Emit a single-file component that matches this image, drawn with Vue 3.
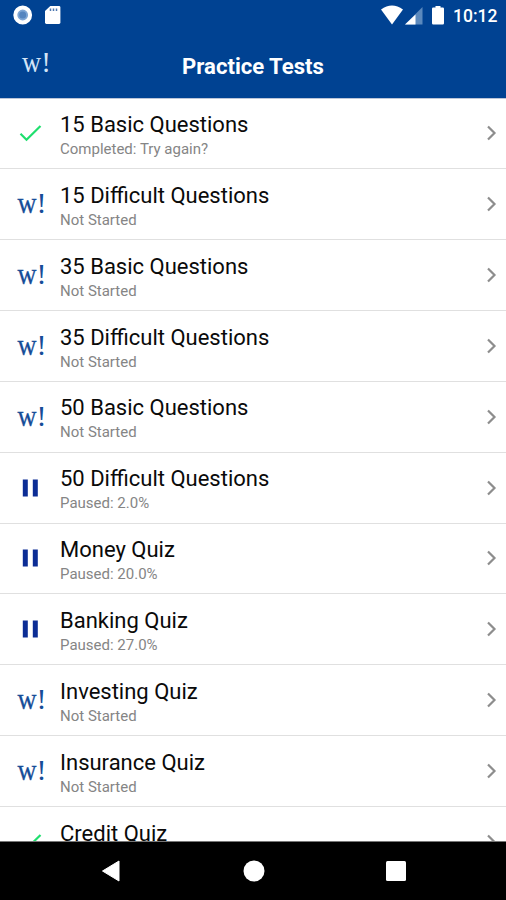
<script setup>
const tests = [
  { title: '15 Basic Questions', note: 'Completed: Try again?', state: 'done' },
  { title: '15 Difficult Questions', note: 'Not Started', state: 'new' },
  { title: '35 Basic Questions', note: 'Not Started', state: 'new' },
  { title: '35 Difficult Questions', note: 'Not Started', state: 'new' },
  { title: '50 Basic Questions', note: 'Not Started', state: 'new' },
  { title: '50 Difficult Questions', note: 'Paused: 2.0%', state: 'paused' },
  { title: 'Money Quiz', note: 'Paused: 20.0%', state: 'paused' },
  { title: 'Banking Quiz', note: 'Paused: 27.0%', state: 'paused' },
  { title: 'Investing Quiz', note: 'Not Started', state: 'new' },
  { title: 'Insurance Quiz', note: 'Not Started', state: 'new' },
  { title: 'Credit Quiz', note: '', state: 'done' },
]
</script>

<template>
  <div class="screen">
    <div class="status">
      <svg class="status-left" width="48" height="20" viewBox="0 0 48 20">
        <circle cx="9.7" cy="10" r="7.4" fill="#7fa6d4" stroke="#fff" stroke-width="4" />
        <circle cx="9.7" cy="10" r="3.5" fill="#5585bf" />
        <path d="M37.3 1h8.7q1.4 0 1.4 1.4v15.2q0 1.4-1.4 1.4H33.4q-1.4 0-1.4-1.4V6z" fill="#fff" />
        <path d="M37.5 3.5v2.6M40.5 3.5v2.6M43.5 3.5v2.6" stroke="#4d77b0" stroke-width="1.5" />
      </svg>
      <svg class="status-right" width="66" height="20" viewBox="0 0 66 20">
        <path d="M0 4.6Q11-3.4 22 4.6L11 19.5z" fill="#fff" />
        <path d="M41.5 2v17.5H24z" fill="#5b89bd" />
        <path d="M34.5 9.4v10.1H24z" fill="#fff" />
        <path d="M54.5 1h5v1.6h2.3q1.2 0 1.2 1.2v14.5q0 1.2-1.2 1.2h-9.6q-1.2 0-1.2-1.2V3.800q0-1.2 1.2-1.2h2.3z" fill="#fff" />
      </svg>
      <span class="time">10:12</span>
    </div>
    <header class="bar">
      <svg class="brand" width="34" height="40" viewBox="0 0 34 40">
        <text x="2" y="27" font-size="29" textLength="19" lengthAdjust="spacingAndGlyphs">w</text>
        <text x="21.2" y="27" font-size="29">!</text>
      </svg>
      <h1>Practice Tests</h1>
    </header>
    <main class="list">
      <div v-for="t in tests" :key="t.title" class="row">
        <div class="icon">
          <svg v-if="t.state === 'done'" width="24" height="20" viewBox="0 0 24 20">
            <path d="M2.5 10.8l6 6L22.500 3" fill="none" stroke="#1fdf6e" stroke-width="2.2" />
          </svg>
          <svg v-else-if="t.state === 'paused'" width="24" height="20" viewBox="0 0 24 20">
            <path d="M4.8 1.5h5v17h-5zM14.8 1.5h5v17h-5z" fill="#0c2d95" />
          </svg>
          <svg v-else class="mark" width="34" height="40" viewBox="0 0 34 40">
            <text class="letter" x="4.4" y="28.8" font-size="30" textLength="19" lengthAdjust="spacingAndGlyphs">w</text>
            <text x="23.6" y="28.8" font-size="30">!</text>
          </svg>
        </div>
        <div class="copy">
          <div class="title">{{ t.title }}</div>
          <div class="note">{{ t.note }}</div>
        </div>
        <svg class="chevron" width="12" height="16" viewBox="0 0 12 16">
          <path d="M2 1.500L8.500 8 2 14.500" fill="none" stroke="#8d8d8d" stroke-width="2.2" />
        </svg>
      </div>
    </main>
    <nav class="nav">
      <svg width="20" height="22" viewBox="0 0 20 22"><path d="M1.5 11L18 1v20z" fill="#fff" stroke="#fff" stroke-linejoin="round" /></svg>
      <svg width="22" height="22" viewBox="0 0 22 22"><circle cx="11" cy="11" r="10.500" fill="#fff" /></svg>
      <svg width="20" height="20" viewBox="0 0 20 20"><rect width="20" height="20" rx="1.500" fill="#fff" /></svg>
    </nav>
  </div>
</template>

<style>
body {
  margin: 0;
  background: #000;
}
</style>

<style scoped>
.screen {
  width: 506px;
  height: 900px;
  display: flex;
  flex-direction: column;
  overflow: hidden;
  font-family: Roboto, sans-serif;
  background: #fff;
}
svg {
  display: block;
  flex: none;
}
.status {
  height: 32px;
  flex: none;
  display: flex;
  align-items: flex-start;
  background: #004292;
  color: #fff;
  padding: 5px 9px 0 13px;
  box-sizing: border-box;
}
.status-right {
  margin-left: auto;
  margin-right: 6px;
}
.time {
  font-size: 17.5px;
  line-height: 22px;
  font-weight: 500;
  width: 44px;
  white-space: nowrap;
}
.bar {
  height: 66px;
  flex: none;
  display: grid;
  grid-template-columns: 60px 1fr 60px;
  align-items: center;
  background: #004292;
  color: #fff;
}
.brand {
  margin-left: 20px;
  fill: #d3e4f7;
  font-family: "Liberation Serif", serif;
}
h1 {
  margin: 1px 0 0;
  text-align: center;
  font-size: 22.1px;
  line-height: 26px;
  font-weight: 700;
}
.list {
  height: 744px;
  flex: none;
  overflow: hidden;
  padding-top: 0.5px;
  box-shadow: inset 0 1px #bcc5d8;
  border-bottom: 1px solid #777;
  box-sizing: border-box;
}
.row {
  height: 70.85px;
  box-sizing: border-box;
  border-bottom: 1px solid #e0e0e0;
  display: flex;
  align-items: center;
}
.icon {
  width: 60px;
  flex: none;
  display: flex;
  justify-content: center;
}
.mark {
  fill: #164d98;
  font-family: "Liberation Serif", serif;
}
.letter {
  stroke: #164d98;
  stroke-width: 0.3px;
}
.copy {
  flex: 1;
  align-self: flex-start;
  padding-top: 13.6px;
}
.title {
  font-size: 22px;
  line-height: 26px;
  color: #0a0a0a;
}
.note {
  font-size: 15px;
  line-height: 18px;
  padding-top: 2px;
  color: #858585;
}
.chevron {
  margin-right: 8px;
}
.nav {
  flex: 1;
  display: flex;
  justify-content: space-between;
  align-items: center;
  padding: 0 100px 0 101px;
  background: #000;
}
</style>
